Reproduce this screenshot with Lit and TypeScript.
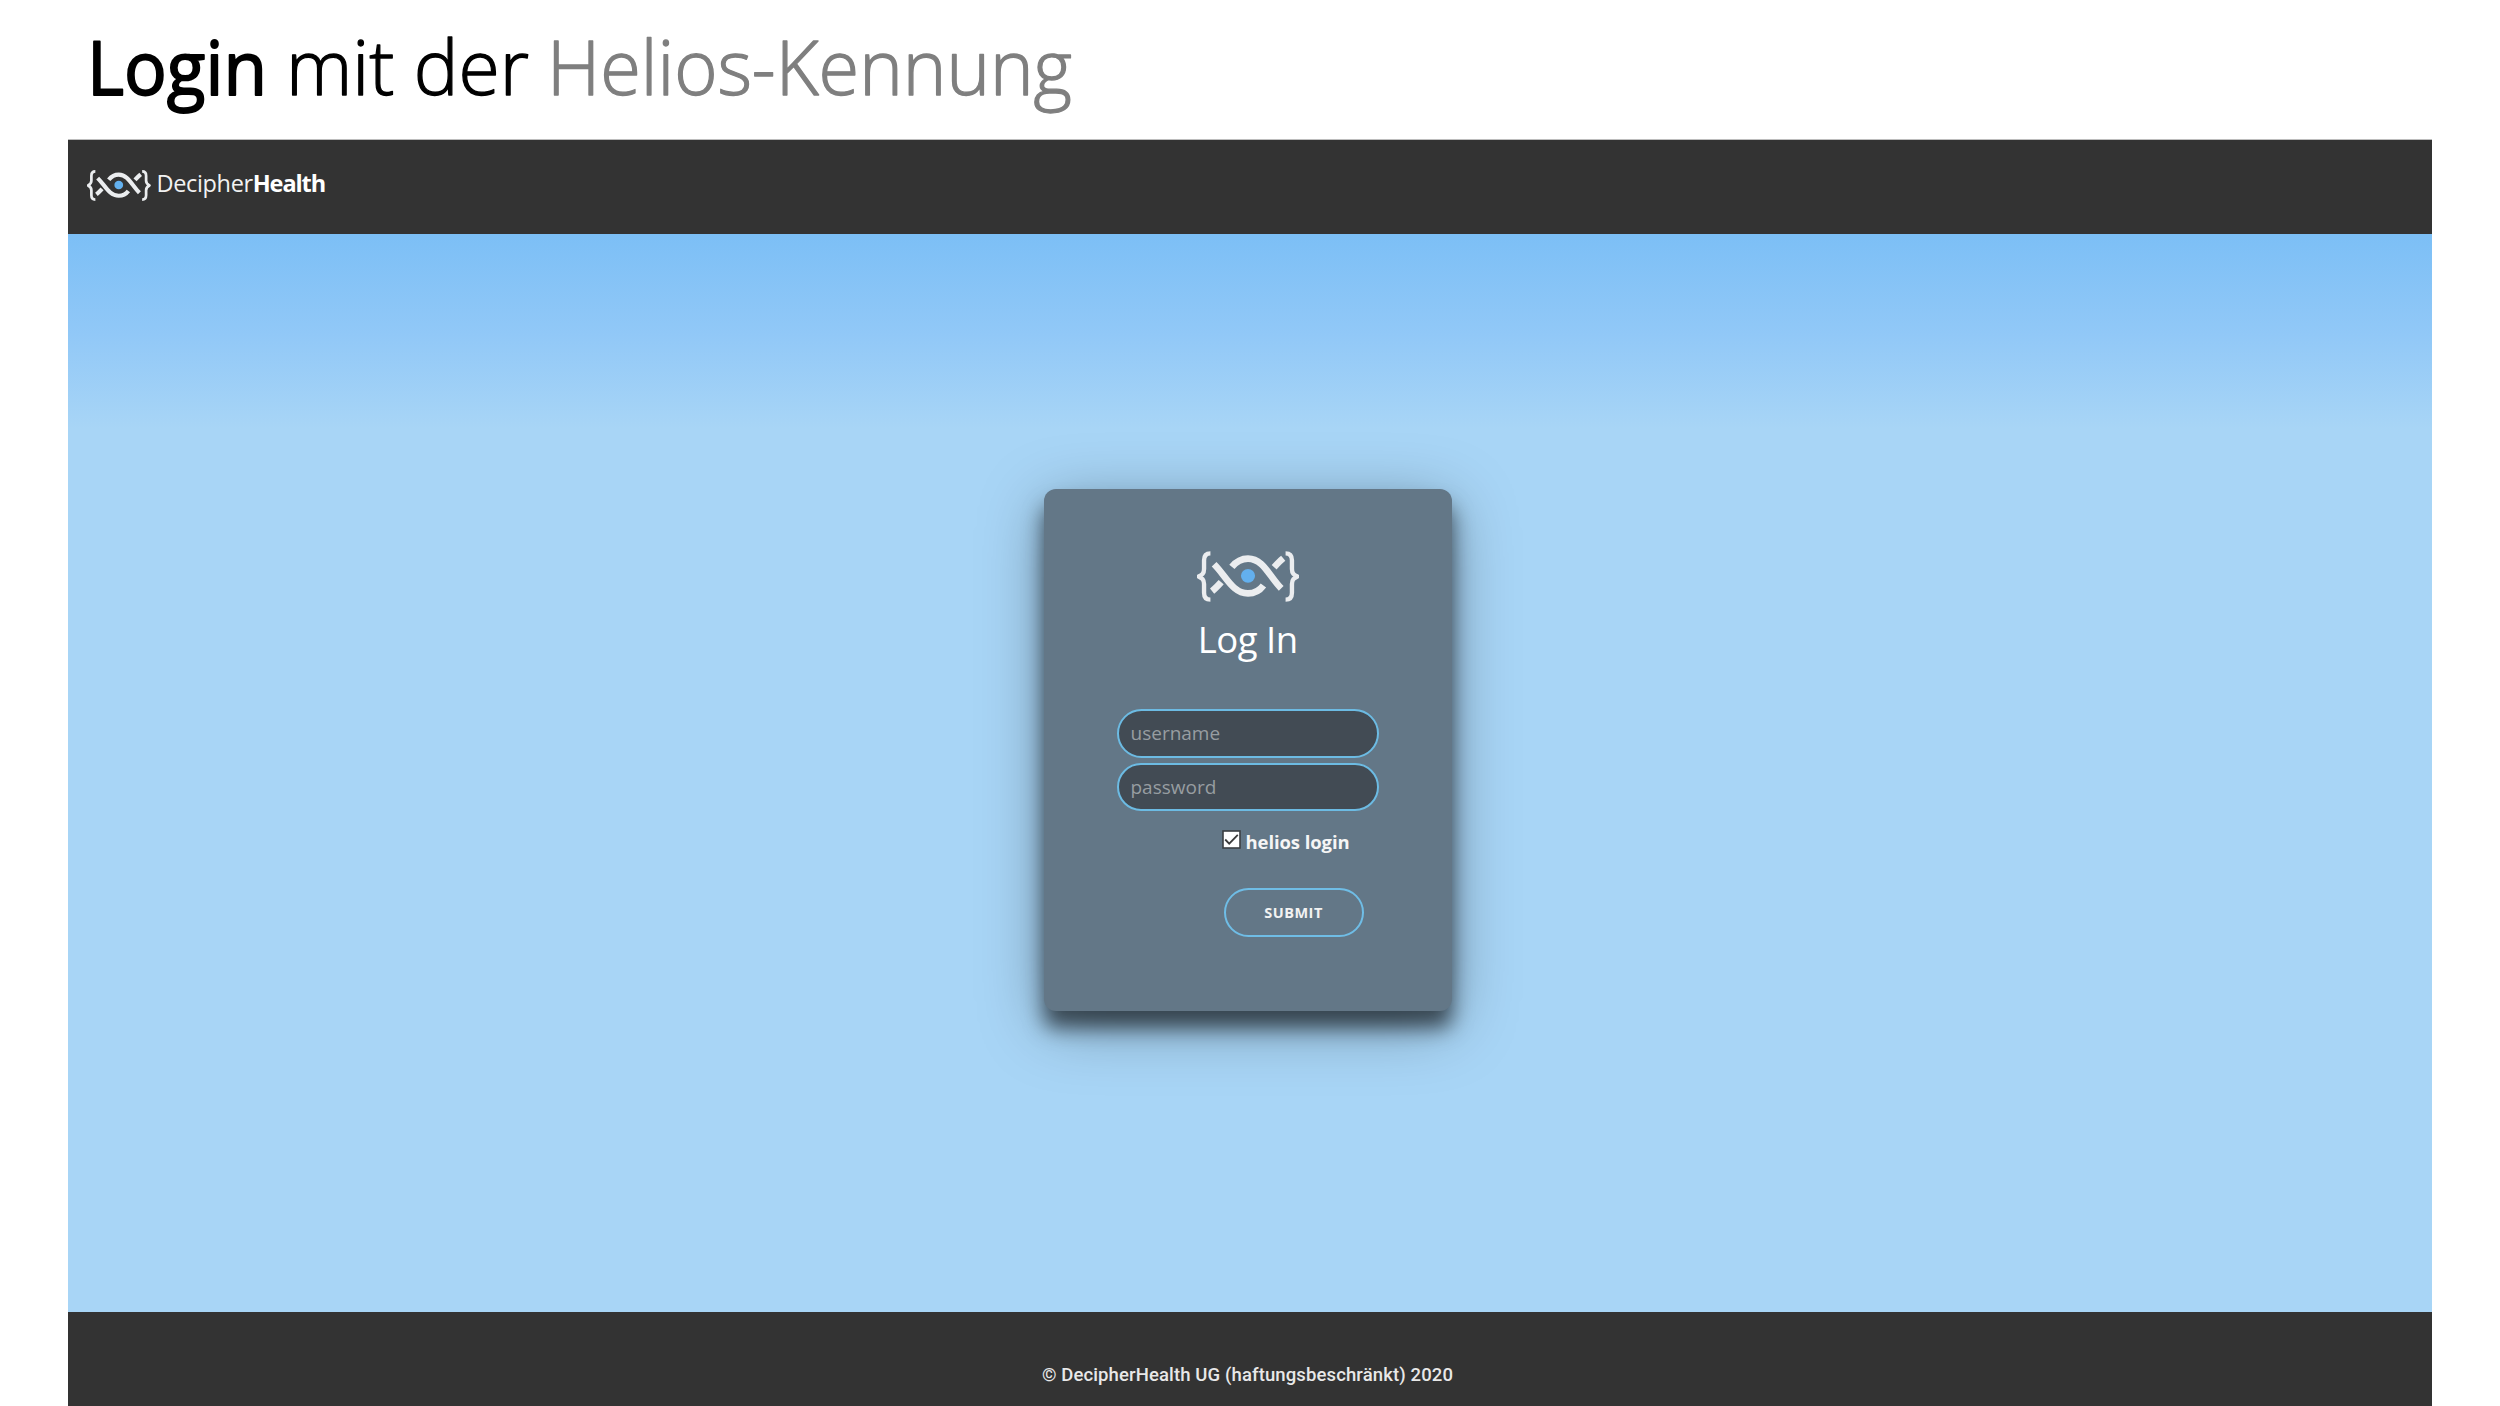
import { LitElement, html, css, svg } from "lit";
import { customElement } from "lit/decorators.js";

@customElement("helix-logo")
class HelixLogo extends LitElement {
  static styles = css`
    :host { display: block; }
    svg { display: block; width: 100%; height: 100%; }
    .strand { fill: none; stroke: #ebedef; stroke-width: 20; }
    .brace { fill: none; stroke: #ebedef; stroke-width: 13; stroke-linejoin: round; }
    .core { fill: #63b0ee; }
  `;
  render() {
    return html`<svg viewBox="52 62 304 154" preserveAspectRatio="none">
      ${svg`
      <path class="brace" d="M92 69 C78 69 73 77 73 90 V116 C73 130 67 134 57 139 C67 144 73 148 73 162 V188 C73 201 78 209 92 209"/>
      <path class="brace" d="M316 69 C330 69 335 77 335 90 V116 C335 130 341 134 351 139 C341 144 335 148 335 162 V188 C335 201 330 209 316 209"/>
      <path class="strand" d="M103 102 C138 137 158 190 204 190 C224 190 239 181 250 166"/>
      <path class="strand" d="M303 175 C268 140 250 85 204 85 C182 85 168 95 156 110"/>
      <path class="strand" d="M97 183 C107 175 115 166 124 156"/>
      <path class="strand" d="M309 84 C299 92 291 101 282 111"/>
      <circle class="core" cx="204" cy="137" r="21"/>`}
    </svg>`;
  }
}

@customElement("app-root")
class AppRoot extends LitElement {
  static styles = css`
    :host { display: block; font-family: "Open Sans", sans-serif; }
    * { box-sizing: border-box; }
    .slide { display: flex; flex-direction: column; width: 2500px; height: 1406px; background: #fff; overflow: hidden; }
    .title { display: block; width: 2500px; height: 139px; flex: none; font-size: 75px; font-weight: 300; stroke-linejoin: round; }
    .title .strong { font-weight: 400; fill: #000; stroke: #000; stroke-width: 1.8; }
    .title .plain { fill: #000; stroke: #000; stroke-width: 1.3; }
    .title .muted { fill: #7f7f7f; stroke: #7f7f7f; stroke-width: 1.3; }
    .frame { display: flex; flex-direction: column; flex: 1; width: 2364px; margin-left: 68px; border-top: 1px solid #bdbdbd; }
    .top { flex: none; height: 94px; background: #333; display: flex; padding: 30px 0 0 19px; gap: 6px; color: #f2f2f2; }
    .top helix-logo { width: 63.5px; height: 31px; }
    .brand { font-size: 23.5px; line-height: 32px; margin-top: -3px; letter-spacing: -0.35px; white-space: nowrap; }
    .brand b { font-weight: 700; letter-spacing: -1.1px; color: #fff; }
    .main { flex: 1; display: flex; padding: 255px 0 0 975.5px; background: linear-gradient(#7cbff6 0, #91c8f7 100px, #a8d5f6 195px, #a8d5f6 100%); }
    .card { width: 408.5px; height: 522px; border-radius: 12px; background: #637787; display: flex; flex-direction: column; padding: 62px 73px 0; box-shadow: 0 17px 20px rgba(0,0,0,.58), 0 14px 64px rgba(0,0,0,.34); }
    .card helix-logo { width: 102px; height: 51px; margin-left: 80px; }
    .heading { margin: 12px 0 0; text-align: center; font-size: 36.5px; line-height: 50px; font-weight: 400; letter-spacing: -0.5px; color: #fff; }
    .field { display: block; width: 262px; height: 48.5px; margin: 0 0 5px; padding: 0 12px 0; border: 2px solid #6cbbe3; border-radius: 25px; background: #424b54; font: 400 19px "Open Sans", sans-serif; color: #ddd; outline: none; }
    .field::placeholder { color: #979da1; opacity: 1; }
    .fields { margin-top: 45px; }
    .check { display: flex; margin: 13.5px 0 0 105.5px; gap: 4.5px; height: 25.5px; font-size: 18.5px; line-height: 24px; letter-spacing: -0.1px; font-weight: 700; color: #f5f5f5; white-space: nowrap; }
    .box { width: 19px; height: 19px; flex: none; }
    .submit { width: 140px; height: 48.5px; margin: 33px 0 0 107px; border: 2px solid #6fbde6; border-radius: 25px; background: transparent; color: #f2f2f2; font: 700 14.5px "Open Sans", sans-serif; letter-spacing: 0.5px; padding: 1px 0 0; }
    .bottom { flex: none; height: 94px; background: #333; color: #e8e8e8; text-align: center; font: 500 18.5px/24px Roboto, sans-serif; letter-spacing: 0.12px; padding: 51px 5px 0 0; }
  `;
  render() {
    return html`<div class="slide">
      <svg class="title" viewBox="0 0 2500 139">
        <text class="strong" x="87" y="95" textLength="180" lengthAdjust="spacingAndGlyphs">Login</text>
        <text class="plain" x="286" y="95" textLength="243" lengthAdjust="spacingAndGlyphs">mit der</text>
        <text class="muted" x="547" y="95" textLength="525" lengthAdjust="spacingAndGlyphs">Helios-Kennung</text>
      </svg>
      <div class="frame">
        <header class="top"><helix-logo></helix-logo><span class="brand">Decipher<b>Health</b></span></header>
        <main class="main">
          <form class="card">
            <helix-logo></helix-logo>
            <h1 class="heading">Log In</h1>
            <div class="fields">
              <input class="field" type="text" placeholder="username">
              <input class="field" type="password" placeholder="password">
            </div>
            <label class="check">
              <svg class="box" viewBox="0 0 19 19"><rect x="1" y="1" width="17" height="17" fill="#fff" stroke="#3b3f43" stroke-width="1.6"/><path d="M3.2 9.5 L7.2 13.6 L15.8 4.9" fill="none" stroke="#3b3b3b" stroke-width="1.8"/></svg>
              <span>helios login</span>
            </label>
            <button class="submit" type="button">SUBMIT</button>
          </form>
        </main>
        <footer class="bottom">© DecipherHealth UG (haftungsbeschränkt) 2020</footer>
      </div>
    </div>`;
  }
}
